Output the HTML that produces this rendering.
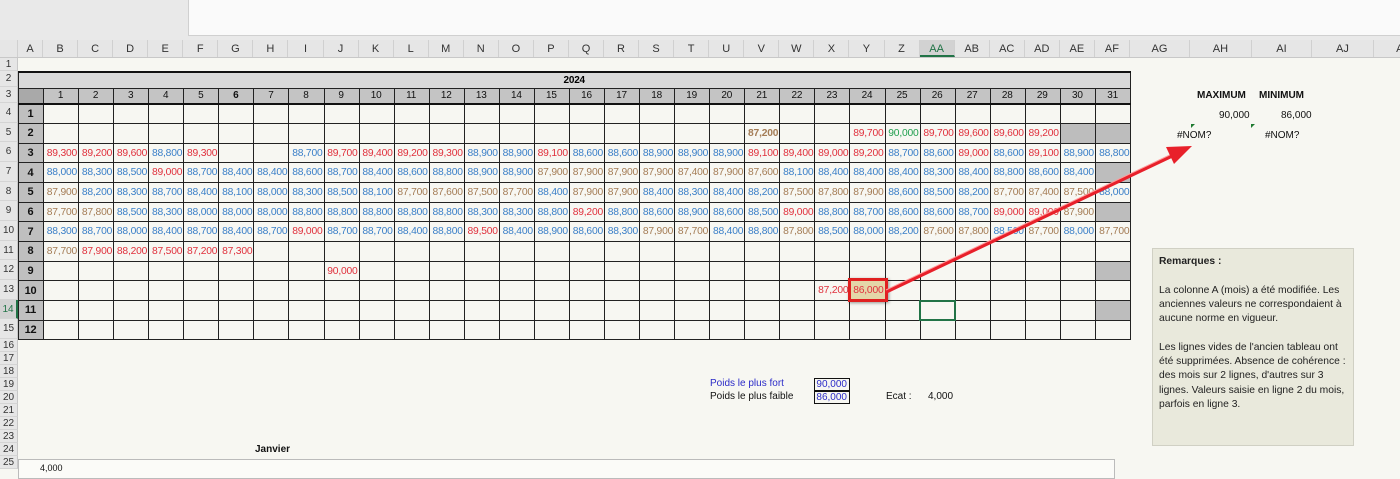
<!DOCTYPE html>
<html><head><meta charset="utf-8">
<style>
*{margin:0;padding:0;box-sizing:border-box}
body{width:1400px;height:468px;overflow:hidden;background:#f7f7f2;font-family:"Liberation Sans",Arial,sans-serif;position:relative}
.top{position:absolute;left:0;top:0;width:1400px;height:40px;background:#e9e9e9}
.topw{position:absolute;left:188px;top:0;width:1212px;height:36px;background:#fafafa;border-left:1px solid #d0d0d0;border-bottom:1px solid #d0d0d0}
.colh{position:absolute;left:0;top:40px;height:18px;width:1400px;background:#e6e6e6;display:flex;font-size:11px;color:#333;border-bottom:1px solid #c8c8c8}
.colh div{text-align:center;line-height:18px;border-right:1px solid #d0d0d0;flex:none}
.rowh{position:absolute;left:0;width:18px;background:#e6e6e6;font-size:10px;color:#333;text-align:center;border-bottom:1px solid #d4d4d4;border-right:1px solid #c8c8c8}
table{position:absolute;left:18px;top:71px;border-collapse:collapse;table-layout:fixed;width:1112px}
td{border:1px solid #222;font-size:10.3px;text-align:right;padding:0 1px 0 0;white-space:nowrap;overflow:hidden;letter-spacing:-0.2px}
tr.m td{height:19.67px}
td.a{background:#bfbfbf;text-align:center;font-weight:bold;font-size:11px;color:#111}
tr.y td{height:16px;background:#d9d9d9;text-align:center;font-weight:bold;font-size:10px;border-top:2px solid #111}
tr.d td{height:16px;background:#c4c4c4;text-align:center;font-size:10px;color:#111;border-bottom:2px solid #111}
.r{color:#e0303c}.b{color:#3a7fc8}.n{color:#a47c55}.g{color:#22a050}.x{background:#bdbdbd}
.abs{position:absolute;font-size:10px;color:#111;white-space:nowrap}
</style></head><body>
<div class="top"></div><div class="topw"></div>
<div class="colh">
<div style="width:18px"></div><div style="width:25px">A</div>
<div style="width:35.07px">B</div><div style="width:35.07px">C</div><div style="width:35.07px">D</div><div style="width:35.07px">E</div><div style="width:35.07px">F</div><div style="width:35.07px">G</div><div style="width:35.07px">H</div><div style="width:35.07px">I</div><div style="width:35.07px">J</div><div style="width:35.07px">K</div><div style="width:35.07px">L</div><div style="width:35.07px">M</div><div style="width:35.07px">N</div><div style="width:35.07px">O</div><div style="width:35.07px">P</div><div style="width:35.07px">Q</div><div style="width:35.07px">R</div><div style="width:35.07px">S</div><div style="width:35.07px">T</div><div style="width:35.07px">U</div><div style="width:35.07px">V</div><div style="width:35.07px">W</div><div style="width:35.07px">X</div><div style="width:35.07px">Y</div><div style="width:35.07px">Z</div><div style="width:35.07px;background:#d2d2d2;color:#217346;border-bottom:2px solid #217346">AA</div><div style="width:35.07px">AB</div><div style="width:35.07px">AC</div><div style="width:35.07px">AD</div><div style="width:35.07px">AE</div><div style="width:35.07px">AF</div>
<div style="width:60px">AG</div><div style="width:62px">AH</div><div style="width:60px">AI</div><div style="width:62px">AJ</div><div style="width:60px">AK</div>
</div>
<div class="rowh" style="top:58px;height:13px;line-height:13px">1</div>
<div class="rowh" style="top:71px;height:16px;line-height:16px">2</div>
<div class="rowh" style="top:87px;height:16px;line-height:16px">3</div>
<div class="rowh" style="top:103px;height:19.7px;line-height:20px">4</div>
<div class="rowh" style="top:122.7px;height:19.7px;line-height:20px">5</div>
<div class="rowh" style="top:142.3px;height:19.7px;line-height:20px">6</div>
<div class="rowh" style="top:162px;height:19.7px;line-height:20px">7</div>
<div class="rowh" style="top:181.7px;height:19.7px;line-height:20px">8</div>
<div class="rowh" style="top:201.3px;height:19.7px;line-height:20px">9</div>
<div class="rowh" style="top:221px;height:19.7px;line-height:20px">10</div>
<div class="rowh" style="top:240.7px;height:19.7px;line-height:20px">11</div>
<div class="rowh" style="top:260.3px;height:19.7px;line-height:20px">12</div>
<div class="rowh" style="top:280px;height:19.7px;line-height:20px">13</div>
<div class="rowh" style="top:299.7px;height:19.7px;line-height:20px;color:#217346;background:#d2d2d2;border-right:2px solid #217346">14</div>
<div class="rowh" style="top:319.3px;height:19.7px;line-height:20px">15</div>
<div class="rowh" style="top:339px;height:13px;line-height:13px">16</div>
<div class="rowh" style="top:352px;height:13px;line-height:13px">17</div>
<div class="rowh" style="top:365px;height:13px;line-height:13px">18</div>
<div class="rowh" style="top:378px;height:13px;line-height:13px">19</div>
<div class="rowh" style="top:391px;height:13px;line-height:13px">20</div>
<div class="rowh" style="top:404px;height:13px;line-height:13px">21</div>
<div class="rowh" style="top:417px;height:13px;line-height:13px">22</div>
<div class="rowh" style="top:430px;height:13px;line-height:13px">23</div>
<div class="rowh" style="top:443px;height:13px;line-height:13px">24</div>
<div class="rowh" style="top:456px;height:13px;line-height:13px">25</div>

<table>
<colgroup><col style="width:25px"><col span="31" style="width:35.07px"></colgroup>
<tr class="y"><td colspan="32">2024</td></tr>
<tr class="d"><td style="background:#a9a9a9"></td><td>1</td><td>2</td><td>3</td><td>4</td><td>5</td><td><b>6</b></td><td>7</td><td>8</td><td>9</td><td>10</td><td>11</td><td>12</td><td>13</td><td>14</td><td>15</td><td>16</td><td>17</td><td>18</td><td>19</td><td>20</td><td>21</td><td>22</td><td>23</td><td>24</td><td>25</td><td>26</td><td>27</td><td>28</td><td>29</td><td>30</td><td>31</td></tr>
<tr class="m"><td class="a">1</td><td></td><td></td><td></td><td></td><td></td><td></td><td></td><td></td><td></td><td></td><td></td><td></td><td></td><td></td><td></td><td></td><td></td><td></td><td></td><td></td><td></td><td></td><td></td><td></td><td></td><td></td><td></td><td></td><td></td><td></td><td></td></tr>
<tr class="m"><td class="a">2</td><td></td><td></td><td></td><td></td><td></td><td></td><td></td><td></td><td></td><td></td><td></td><td></td><td></td><td></td><td></td><td></td><td></td><td></td><td></td><td></td><td class="n"><b>87,200</b></td><td></td><td></td><td class="r">89,700</td><td class="g">90,000</td><td class="r">89,700</td><td class="r">89,600</td><td class="r">89,600</td><td class="r">89,200</td><td class="x"></td><td class="x"></td></tr>
<tr class="m"><td class="a">3</td><td class="r">89,300</td><td class="r">89,200</td><td class="r">89,600</td><td class="b">88,800</td><td class="r">89,300</td><td></td><td></td><td class="b">88,700</td><td class="r">89,700</td><td class="r">89,400</td><td class="r">89,200</td><td class="r">89,300</td><td class="b">88,900</td><td class="b">88,900</td><td class="r">89,100</td><td class="b">88,600</td><td class="b">88,600</td><td class="b">88,900</td><td class="b">88,900</td><td class="b">88,900</td><td class="r">89,100</td><td class="r">89,400</td><td class="r">89,000</td><td class="r">89,200</td><td class="b">88,700</td><td class="b">88,600</td><td class="r">89,000</td><td class="b">88,600</td><td class="r">89,100</td><td class="b">88,900</td><td class="b">88,800</td></tr>
<tr class="m"><td class="a">4</td><td class="b">88,000</td><td class="b">88,300</td><td class="b">88,500</td><td class="r">89,000</td><td class="b">88,700</td><td class="b">88,400</td><td class="b">88,400</td><td class="b">88,600</td><td class="b">88,700</td><td class="b">88,400</td><td class="b">88,600</td><td class="b">88,800</td><td class="b">88,900</td><td class="b">88,900</td><td class="n">87,900</td><td class="n">87,900</td><td class="n">87,900</td><td class="n">87,900</td><td class="n">87,400</td><td class="n">87,900</td><td class="n">87,600</td><td class="b">88,100</td><td class="b">88,400</td><td class="b">88,400</td><td class="b">88,400</td><td class="b">88,300</td><td class="b">88,400</td><td class="b">88,800</td><td class="b">88,600</td><td class="b">88,400</td><td class="x"></td></tr>
<tr class="m"><td class="a">5</td><td class="n">87,900</td><td class="b">88,200</td><td class="b">88,300</td><td class="b">88,700</td><td class="b">88,400</td><td class="b">88,100</td><td class="b">88,000</td><td class="b">88,300</td><td class="b">88,500</td><td class="b">88,100</td><td class="n">87,700</td><td class="n">87,600</td><td class="n">87,500</td><td class="n">87,700</td><td class="b">88,400</td><td class="n">87,900</td><td class="n">87,900</td><td class="b">88,400</td><td class="b">88,300</td><td class="b">88,400</td><td class="b">88,200</td><td class="n">87,500</td><td class="n">87,800</td><td class="n">87,900</td><td class="b">88,600</td><td class="b">88,500</td><td class="b">88,200</td><td class="n">87,700</td><td class="n">87,400</td><td class="n">87,500</td><td class="b">88,000</td></tr>
<tr class="m"><td class="a">6</td><td class="n">87,700</td><td class="n">87,800</td><td class="b">88,500</td><td class="b">88,300</td><td class="b">88,000</td><td class="b">88,000</td><td class="b">88,000</td><td class="b">88,800</td><td class="b">88,800</td><td class="b">88,800</td><td class="b">88,800</td><td class="b">88,800</td><td class="b">88,300</td><td class="b">88,300</td><td class="b">88,800</td><td class="r">89,200</td><td class="b">88,800</td><td class="b">88,600</td><td class="b">88,900</td><td class="b">88,600</td><td class="b">88,500</td><td class="r">89,000</td><td class="b">88,800</td><td class="b">88,700</td><td class="b">88,600</td><td class="b">88,600</td><td class="b">88,700</td><td class="r">89,000</td><td class="r">89,000</td><td class="n">87,900</td><td class="x"></td></tr>
<tr class="m"><td class="a">7</td><td class="b">88,300</td><td class="b">88,700</td><td class="b">88,000</td><td class="b">88,400</td><td class="b">88,700</td><td class="b">88,400</td><td class="b">88,700</td><td class="r">89,000</td><td class="b">88,700</td><td class="b">88,700</td><td class="b">88,400</td><td class="b">88,800</td><td class="r">89,500</td><td class="b">88,400</td><td class="b">88,900</td><td class="b">88,600</td><td class="b">88,300</td><td class="n">87,900</td><td class="n">87,700</td><td class="b">88,400</td><td class="b">88,800</td><td class="n">87,800</td><td class="b">88,500</td><td class="b">88,000</td><td class="b">88,200</td><td class="n">87,600</td><td class="n">87,800</td><td class="b">88,500</td><td class="n">87,700</td><td class="b">88,000</td><td class="n">87,700</td></tr>
<tr class="m"><td class="a">8</td><td class="n">87,700</td><td class="r">87,900</td><td class="r">88,200</td><td class="r">87,500</td><td class="r">87,200</td><td class="r">87,300</td><td></td><td></td><td></td><td></td><td></td><td></td><td></td><td></td><td></td><td></td><td></td><td></td><td></td><td></td><td></td><td></td><td></td><td></td><td></td><td></td><td></td><td></td><td></td><td></td><td></td></tr>
<tr class="m"><td class="a">9</td><td></td><td></td><td></td><td></td><td></td><td></td><td></td><td></td><td class="r">90,000</td><td></td><td></td><td></td><td></td><td></td><td></td><td></td><td></td><td></td><td></td><td></td><td></td><td></td><td></td><td></td><td></td><td></td><td></td><td></td><td></td><td></td><td class="x"></td></tr>
<tr class="m"><td class="a">10</td><td></td><td></td><td></td><td></td><td></td><td></td><td></td><td></td><td></td><td></td><td></td><td></td><td></td><td></td><td></td><td></td><td></td><td></td><td></td><td></td><td></td><td></td><td class="r">87,200</td><td class="r" style="background:#e4d6a8">86,000</td><td></td><td></td><td></td><td></td><td></td><td></td><td></td></tr>
<tr class="m"><td class="a">11</td><td></td><td></td><td></td><td></td><td></td><td></td><td></td><td></td><td></td><td></td><td></td><td></td><td></td><td></td><td></td><td></td><td></td><td></td><td></td><td></td><td></td><td></td><td></td><td></td><td></td><td style="outline:2px solid #217346;outline-offset:-1px"></td><td></td><td></td><td></td><td></td><td class="x"></td></tr>
<tr class="m"><td class="a">12</td><td></td><td></td><td></td><td></td><td></td><td></td><td></td><td></td><td></td><td></td><td></td><td></td><td></td><td></td><td></td><td></td><td></td><td></td><td></td><td></td><td></td><td></td><td></td><td></td><td></td><td></td><td></td><td></td><td></td><td></td><td></td></tr>
</table>

<div style="position:absolute;left:848px;top:278px;width:40px;height:24px;border:3px solid #e02020;box-shadow:1px 1px 3px rgba(0,0,0,.4)"></div>

<svg style="position:absolute;left:0;top:0" width="1400" height="468">
<line x1="886" y1="292" x2="1176" y2="154" stroke="#e8202a" stroke-width="3.5"/>
<line x1="886" y1="290" x2="1176" y2="152" stroke="#ff9a9a" stroke-width="1"/>
<polygon points="1192,146 1166,147 1174,164" fill="#e8202a"/>
<polygon points="1191,124 1195,124 1191,128" fill="#1e7a30"/>
<polygon points="1251,124 1255,124 1251,128" fill="#1e7a30"/>
</svg>

<div class="abs" style="left:1197px;top:90px;font-weight:bold">MAXIMUM</div>
<div class="abs" style="left:1259px;top:90px;font-weight:bold">MINIMUM</div>
<div class="abs" style="left:1219px;top:110px">90,000</div>
<div class="abs" style="left:1281px;top:110px">86,000</div>
<div class="abs" style="left:1177px;top:130px">#NOM?</div>
<div class="abs" style="left:1265px;top:130px">#NOM?</div>

<div style="position:absolute;left:1152px;top:248px;width:202px;height:198px;background:#e9e9dc;border:1px solid #d0d0c4;padding:6px 6px;font-size:10.3px;line-height:14.3px;color:#222">
<b>Remarques :</b><br><br>La colonne A (mois) a été modifiée. Les anciennes valeurs ne correspondaient à aucune norme en vigueur.<br><br>Les lignes vides de l'ancien tableau ont été supprimées. Absence de cohérence : des mois sur 2 lignes, d'autres sur 3 lignes. Valeurs saisie en ligne 2 du mois, parfois en ligne 3.
</div>

<div class="abs" style="left:710px;top:378px;color:#2b2bc8">Poids le plus fort</div>
<div class="abs" style="left:710px;top:391px">Poids le plus faible</div>
<div class="abs" style="left:814px;top:378px;width:36px;height:13px;border:1px solid #111;color:#2b2bc8;text-align:right;padding-right:2px;line-height:11px">90,000</div>
<div class="abs" style="left:814px;top:391px;width:36px;height:13px;border:1px solid #111;color:#2b2bc8;text-align:right;padding-right:2px;line-height:11px">86,000</div>
<div class="abs" style="left:886px;top:391px">Ecat :</div>
<div class="abs" style="left:928px;top:391px">4,000</div>

<div class="abs" style="left:255px;top:444px;font-weight:bold">Janvier</div>
<div style="position:absolute;left:18px;top:459px;width:1097px;height:20px;border:1px solid #bbb;background:#fbfbf8"></div>
<div class="abs" style="left:40px;top:463px;font-size:9px">4,000</div>
</body></html>
